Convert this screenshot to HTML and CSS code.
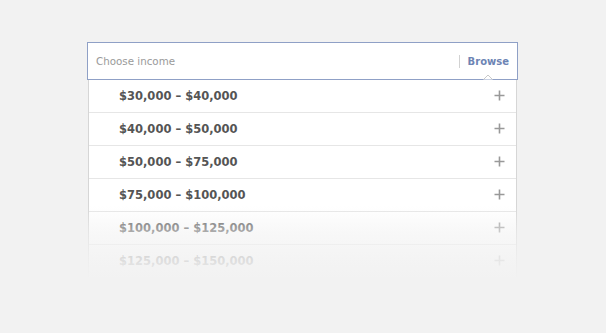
FILE: index.html
```html
<!DOCTYPE html>
<html>
<head>
<meta charset="utf-8">
<link rel="stylesheet" href="styles.css">
</head>
<body>
<div class="wrap">
  <div class="field">
    <span class="placeholder">Choose income</span>
    <span class="sep"></span>
    <span class="browse">Browse</span>
    <svg class="caret" width="10" height="6" viewBox="0 0 10 6"><path d="M0.5 5.5 L5 1 L9.5 5.5" fill="#fff" stroke="#c9c9c9" stroke-width="1"/></svg>
  </div>
  <div class="list">
    <div class="row"><span>$30,000 – $40,000</span><svg class="plus" width="11" height="11" viewBox="0 0 11 11"><path d="M5.5 0.5 V10.5 M0.5 5.5 H10.5" stroke="#999" stroke-width="1.6"/></svg></div>
    <div class="row"><span>$40,000 – $50,000</span><svg class="plus" width="11" height="11" viewBox="0 0 11 11"><path d="M5.5 0.5 V10.5 M0.5 5.5 H10.5" stroke="#999" stroke-width="1.6"/></svg></div>
    <div class="row"><span>$50,000 – $75,000</span><svg class="plus" width="11" height="11" viewBox="0 0 11 11"><path d="M5.5 0.5 V10.5 M0.5 5.5 H10.5" stroke="#999" stroke-width="1.6"/></svg></div>
    <div class="row"><span>$75,000 – $100,000</span><svg class="plus" width="11" height="11" viewBox="0 0 11 11"><path d="M5.5 0.5 V10.5 M0.5 5.5 H10.5" stroke="#999" stroke-width="1.6"/></svg></div>
    <div class="row"><span>$100,000 – $125,000</span><svg class="plus" width="11" height="11" viewBox="0 0 11 11"><path d="M5.5 0.5 V10.5 M0.5 5.5 H10.5" stroke="#999" stroke-width="1.6"/></svg></div>
    <div class="row"><span>$125,000 – $150,000</span><svg class="plus" width="11" height="11" viewBox="0 0 11 11"><path d="M5.5 0.5 V10.5 M0.5 5.5 H10.5" stroke="#999" stroke-width="1.6"/></svg></div>
    <div class="fade"></div>
  </div>
</div>
</body>
</html>
```
FILE: styles.css
```css
html, body {
  margin: 0;
  padding: 0;
  background: #f2f2f2;
  font-family: "DejaVu Sans", "Liberation Sans", sans-serif;
}
.wrap {
  padding: 42px 0 0 87px;
  width: 431px;
}
.field {
  position: relative;
  height: 36px;
  background: #fff;
  border: 1px solid #8fa0c6;
  display: flex;
  align-items: center;
  padding: 0 8px 0 8px;
}
.placeholder {
  flex: 1;
  font-size: 10.3px;
  color: #9a9a9a;
}
.sep {
  width: 1px;
  height: 13px;
  background: #d2d2d2;
  margin-right: 8px;
}
.browse {
  font-size: 10px;
  font-weight: bold;
  color: #6d84b4;
}
.caret {
  position: absolute;
  left: 395px;
  bottom: -1px;
}
.list {
  position: relative;
  margin: 0 1px;
  background: #fff;
  border-left: 1px solid #d6d6d6;
  border-right: 1px solid #d6d6d6;
}
.row {
  height: 32px;
  border-bottom: 1px solid #e6e6e6;
  display: flex;
  align-items: center;
  justify-content: space-between;
  padding: 0 11px 1px 30px;
  box-sizing: content-box;
  font-size: 11.5px;
  font-weight: bold;
  color: #555;
}
.row {
  height: 31px;
}
.plus {
  display: block;
}
.fade {
  position: absolute;
  left: -2px;
  right: -2px;
  top: 126px;
  bottom: -2px;
  background: linear-gradient(to bottom, rgba(242,242,242,0) 0%, rgba(242,242,242,0.55) 35%, rgba(242,242,242,0.85) 70%, #f2f2f2 100%);
}
```
